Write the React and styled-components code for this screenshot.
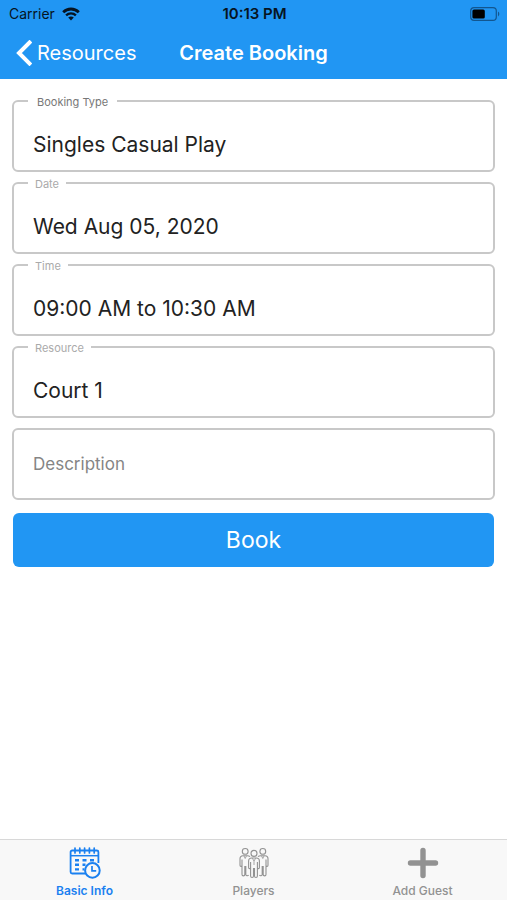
import React, { useState } from "react";
import styled, { createGlobalStyle } from "styled-components";

const fields = [
  { id: "type", label: "Booking Type", value: "Singles Casual Play", strong: true },
  { id: "date", label: "Date", value: "Wed Aug 05, 2020" },
  { id: "time", label: "Time", value: "09:00 AM to 10:30 AM" },
  { id: "resource", label: "Resource", value: "Court 1" },
];

const WifiIcon = () => (
  <svg width="18" height="14" viewBox="0 0 18 14" fill="none" aria-hidden="true">
    <path d="M1.2 5.2C5.6 0.9 12.4 0.9 16.8 5.2" stroke="#061422" strokeWidth="2.8" />
    <path d="M4.1 8.4C6.9 5.7 11.1 5.7 13.9 8.4" stroke="#061422" strokeWidth="2.4" />
    <path d="M6.2 10.6C7.8 9 10.2 9 11.8 10.6L9 13.6Z" fill="#061422" />
  </svg>
);

const BatteryIcon = () => (
  <svg width="30" height="14" viewBox="0 0 30 14" fill="none" aria-hidden="true">
    <rect x="0.7" y="0.7" width="25.6" height="12.6" rx="3.4" stroke="#12568f" strokeWidth="1.2" />
    <rect x="2.4" y="2.4" width="12.4" height="9.2" rx="1.6" fill="#000" />
    <path d="M28 4.6C29.8 5.4 29.8 8.6 28 9.4Z" fill="#12568f" />
  </svg>
);

const BackIcon = () => (
  <svg width="16" height="26" viewBox="0 0 16 26" fill="none" aria-hidden="true">
    <path d="M13.5 2.5L3 13L13.5 23.5" stroke="#fff" strokeWidth="4" strokeLinecap="square" strokeLinejoin="miter" />
  </svg>
);

const CalendarIcon = () => (
  <svg width="32" height="32" viewBox="0 0 32 32" fill="none" stroke="currentColor" aria-hidden="true">
    <path d="M16 26.5H3.2C2.2 26.5 1.6 25.9 1.6 25V5C1.6 4.1 2.2 3.5 3.2 3.5H27.8C28.8 3.5 29.4 4.1 29.4 5V16" strokeWidth="1.8" />
    <path d="M2 8.7H29" strokeWidth="1.5" />
    <path d="M6 1V6M10.8 1V6M15.6 1V6M20.4 1V6M25.2 1V6" strokeWidth="1.7" strokeLinecap="round" />
    <path d="M6 13.2H10M13.5 13.2H17.5M21 13.2H25M6 17.8H10M13.5 17.8H16.5M6 22.4H10M13.5 22.4H15.5" strokeWidth="2.4" />
    <circle cx="23.4" cy="23.4" r="7.3" strokeWidth="2" fill="#f8f8f8" />
    <path d="M23 19V23.8H27.2" strokeWidth="1.7" />
  </svg>
);

const PlayersIcon = () => (
  <svg width="30" height="32" viewBox="0 0 30 32" fill="none" stroke="currentColor" strokeWidth="1.1" aria-hidden="true">
    <circle cx="6.2" cy="4.4" r="2.9" />
    <circle cx="23.8" cy="4.4" r="2.9" />
    <path d="M11 9.6C10.4 9 9.4 8.7 8.2 8.7H4C2 8.7 1 9.8 1 11.8V18.2C1 19.7 3 19.7 3 18.2V12.5V27.5C3 29.3 5.8 29.3 5.8 27.5V19.5H6.8V27.5C6.8 29 9 29.2 9.5 28" />
    <path d="M19 9.6C19.6 9 20.6 8.7 21.8 8.7H26C28 8.7 29 9.8 29 11.8V18.2C29 19.7 27 19.7 27 18.2V12.5V27.5C27 29.3 24.2 29.3 24.2 27.5V19.5H23.2V27.5C23.2 29 21 29.2 20.5 28" />
    <circle cx="15" cy="6.4" r="3" />
    <path d="M12.8 11H17.2C19.2 11 20.4 12 20.4 14V20.5C20.4 22 18.4 22 18.4 20.5V15V29C18.4 31 15.5 31 15.5 29V21.5H14.5V29C14.5 31 11.6 31 11.6 29V15V20.5C11.6 22 9.6 22 9.6 20.5V14C9.6 12 10.8 11 12.8 11Z" />
    <path d="M13.3 11.2L15 14L16.7 11.2M15 14V18M5 9L6.2 11.5L7.4 9M22.6 9L23.8 11.5L25 9" strokeWidth="0.8" />
  </svg>
);

const PlusIcon = () => (
  <svg width="32" height="32" viewBox="0 0 32 32" fill="none" stroke="currentColor" strokeWidth="5.4" strokeLinecap="round" aria-hidden="true">
    <path d="M16 3.5V28.5M3.5 16H28.5" />
  </svg>
);

const tabs = [
  { id: "info", label: "Basic Info", icon: <CalendarIcon /> },
  { id: "players", label: "Players", icon: <PlayersIcon /> },
  { id: "guest", label: "Add Guest", icon: <PlusIcon /> },
];

const App = () => {
  const [activeTab, setActiveTab] = useState("info");
  const [description, setDescription] = useState("");

  return (
    <Screen>
      <GlobalStyle />
      <Header>
        <StatusBar>
          <Carrier>
            Carrier
            <WifiIcon />
          </Carrier>
          <Clock>10:13 PM</Clock>
          <Battery>
            <BatteryIcon />
          </Battery>
        </StatusBar>
        <NavBar>
          <BackButton type="button">
            <BackIcon />
            Resources
          </BackButton>
          <Title>Create Booking</Title>
        </NavBar>
      </Header>

      <Form onSubmit={(e) => e.preventDefault()}>
        {fields.map((field) => (
          <Field key={field.id}>
            <FieldLabel htmlFor={field.id} $strong={field.strong}>
              {field.label}
            </FieldLabel>
            <FieldInput id={field.id} defaultValue={field.value} readOnly />
          </Field>
        ))}
        <Field>
          <DescriptionInput
            aria-label="Description"
            placeholder="Description"
            value={description}
            onChange={(e) => setDescription(e.target.value)}
          />
        </Field>
        <BookButton type="submit">Book</BookButton>
      </Form>

      <TabBar>
        {tabs.map((tab) => (
          <Tab
            key={tab.id}
            type="button"
            $active={activeTab === tab.id}
            onClick={() => setActiveTab(tab.id)}
          >
            {tab.icon}
            {tab.label}
          </Tab>
        ))}
      </TabBar>
    </Screen>
  );
};

export default App;

const GlobalStyle = createGlobalStyle`
  * {
    box-sizing: border-box;
  }
  body {
    margin: 0;
    background-color: #fff;
    font-family: Inter, "Liberation Sans", sans-serif;
  }
  button,
  input {
    font-family: inherit;
  }
  svg {
    display: block;
    flex-shrink: 0;
  }
`;

const Screen = styled.div`
  min-height: 100vh;
  display: flex;
  flex-direction: column;
`;

const Header = styled.header`
  background-color: #2196f3;
`;

const StatusBar = styled.div`
  display: grid;
  grid-template-columns: 1fr auto 1fr;
  align-items: center;
  height: 27px;
  padding: 0 7px 0 9px;
  color: #061422;
  font-size: 14px;
`;

const Carrier = styled.div`
  display: flex;
  align-items: center;
  gap: 7px;
`;

const Clock = styled.div`
  font-size: 15px;
  font-weight: 600;
`;

const Battery = styled.div`
  display: flex;
  justify-content: flex-end;
`;

const NavBar = styled.div`
  display: grid;
  grid-template-columns: 1fr auto 1fr;
  align-items: center;
  height: 52px;
  padding: 0 16px;
`;

const BackButton = styled.button`
  display: flex;
  align-items: center;
  gap: 5px;
  padding: 0;
  border: none;
  background: none;
  color: #fff;
  font-size: 20px;
  cursor: pointer;
`;

const Title = styled.h1`
  margin: 0;
  color: #fff;
  font-size: 20px;
  font-weight: 600;
`;

const Form = styled.form`
  flex: 1;
  display: flex;
  flex-direction: column;
  gap: 10px;
  padding: 21px 12px;
`;

const Field = styled.div`
  position: relative;
  display: flex;
  height: 72px;
  border: 2px solid #c8c8c8;
  border-radius: 6px;
`;

/* sits on the top border and cuts a gap in it */
const FieldLabel = styled.label`
  position: absolute;
  top: -8px;
  left: 14px;
  padding: 0 ${(props) => (props.$strong ? "9px" : "7px")};
  background-color: #fff;
  color: ${(props) => (props.$strong ? "#777" : "#aaa")};
  font-size: 11px;
  line-height: 16px;
`;

const FieldInput = styled.input`
  width: 100%;
  padding: 16px 19px 0;
  border: none;
  outline: none;
  background: none;
  color: #222;
  font-size: 21px;
`;

const DescriptionInput = styled(FieldInput)`
  padding-top: 0;
  font-size: 17px;
  &::placeholder {
    color: #858585;
    opacity: 1;
  }
`;

const BookButton = styled.button`
  height: 54px;
  margin: 3px 1px 0;
  border: none;
  border-radius: 6px;
  background-color: #2196f3;
  color: #fff;
  font-size: 23px;
  cursor: pointer;
`;

const TabBar = styled.nav`
  display: flex;
  height: 61px;
  border-top: 1px solid #d8d8d8;
  background-color: #f8f8f8;
`;

const Tab = styled.button`
  flex: 1;
  display: flex;
  flex-direction: column;
  align-items: center;
  gap: 5px;
  padding: 7px 0 0;
  border: none;
  background: none;
  color: ${(props) => (props.$active ? "#1a80f0" : "#929292")};
  font-size: 12px;
  font-weight: ${(props) => (props.$active ? 600 : 500)};
  line-height: 14px;
  cursor: pointer;
`;
